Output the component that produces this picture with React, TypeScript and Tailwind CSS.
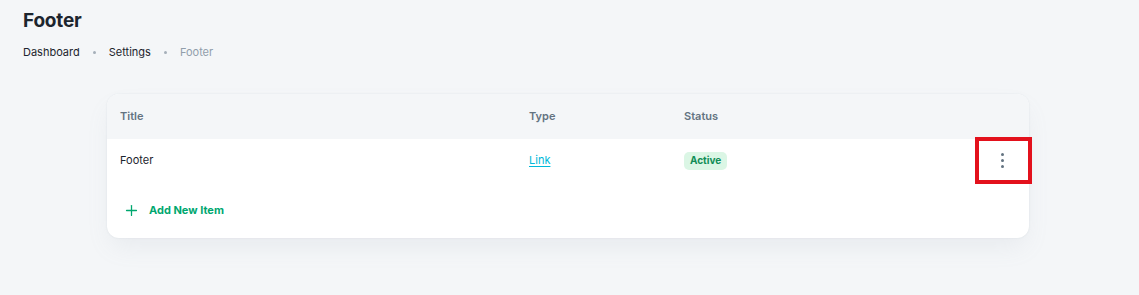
import { Plus } from "lucide-react";

const font = { fontFamily: "Inter, 'Noto Sans', sans-serif" };

function Dot() {
  return <span className="h-[3px] w-[3px] rounded-full bg-[#a5afb9]" />;
}

export default function App() {
  return (
    <div className="min-h-[295px] bg-[#f4f6f8] text-[#1c252e]" style={font}>
      <div className="px-[23px] pt-[8px]">
        <h1 className="text-[19px] leading-[25px] font-bold tracking-[-0.2px]">Footer</h1>
        <nav className="mt-[11px] flex items-center gap-[13px] text-[11px] leading-[16px]">
          <span className="text-[#1c252e]">Dashboard</span>
          <Dot />
          <span className="text-[#1c252e]">Settings</span>
          <Dot />
          <span className="text-[#919eab]">Footer</span>
        </nav>
      </div>

      <div className="ml-[107px] mt-[34px] w-[922px] rounded-[12px] bg-white shadow-[0_0_2px_0_rgba(145,158,171,0.2),0_12px_24px_-4px_rgba(145,158,171,0.12)]">
        <div className="grid h-[45px] grid-cols-[409px_155px_1fr_54px] items-center rounded-t-[12px] bg-[#f4f6f8] pl-[13px] text-[11px] font-semibold text-[#637381]">
          <span>Title</span>
          <span>Type</span>
          <span>Status</span>
          <span />
        </div>

        <div className="grid h-[43px] grid-cols-[409px_155px_1fr_54px] items-center pl-[13px] text-[11px]">
          <span className="text-[#1c252e]">Footer</span>
          <span>
            <a className="text-[#00b8d9] underline underline-offset-2">Link</a>
          </span>
          <span>
            <span className="inline-flex h-[18px] items-center rounded-[5px] bg-[#dbf6e5] px-[6px] text-[10px] font-bold text-[#118d57]">
              Active
            </span>
          </span>
          <div className="relative flex h-full items-center justify-center">
            <div className="flex flex-col items-center gap-[3px]">
              <span className="h-[3px] w-[3px] rounded-full bg-[#637381]" />
              <span className="h-[3px] w-[3px] rounded-full bg-[#637381]" />
              <span className="h-[3px] w-[3px] rounded-full bg-[#637381]" />
            </div>
            <div className="pointer-events-none absolute -right-[3px] -top-[2px] -bottom-[2px] left-0 border-[4px] border-[#e3111c]" />
          </div>
        </div>

        <div className="flex h-[56px] items-center gap-[9px] pl-[16px]">
          <Plus size={17} strokeWidth={1.8} className="text-[#00a76f]" />
          <span className="text-[11px] font-bold text-[#00a76f]">Add New Item</span>
        </div>
      </div>
    </div>
  );
}
